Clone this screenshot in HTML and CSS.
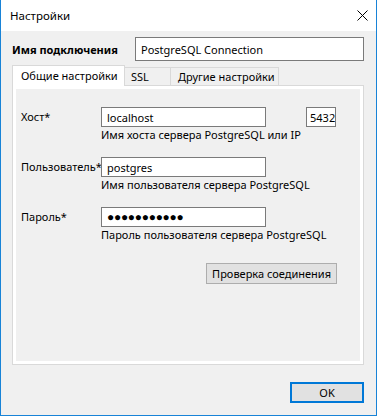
FILE: index.html
```html
<!DOCTYPE html>
<html lang="ru">
<head>
    <meta charset="UTF-8">
    <meta name="viewport" content="width=device-width, initial-scale=1.0">
    <title>Настройки</title>
    <link rel="stylesheet" href="styles.css">
</head>
<body>
    <div class="window">
        <div class="titlebar">
            <span class="title">Настройки</span>
            <svg class="close" width="11" height="11" viewBox="0 0 11 11">
                <path d="M0.5 0.5 L10.5 10.5 M10.5 0.5 L0.5 10.5" stroke="#000" stroke-width="1" fill="none"/>
            </svg>
        </div>
        <div class="content">
            <div class="name-row">
                <label for="conn-name">Имя подключения</label>
                <input type="text" id="conn-name" value="PostgreSQL Connection">
            </div>

            <div class="tabs">
                <div class="tab tab-general active">Общие настройки</div>
                <div class="tab tab-ssl">SSL</div>
                <div class="tab tab-other">Другие настройки</div>
            </div>
            <div class="panel">
                <div class="page">
                    <div class="field">
                        <label for="host">Хост*</label>
                        <div class="control">
                            <div class="line">
                                <input type="text" id="host" class="wide" value="localhost">
                                <input type="text" id="port" class="port" value="5432">
                            </div>
                            <div class="hint">Имя хоста сервера PostgreSQL или IP</div>
                        </div>
                    </div>
                    <div class="field">
                        <label for="user">Пользователь*</label>
                        <div class="control">
                            <input type="text" id="user" class="wide" value="postgres">
                            <div class="hint">Имя пользователя сервера PostgreSQL</div>
                        </div>
                    </div>
                    <div class="field">
                        <label for="pass">Пароль*</label>
                        <div class="control">
                            <div class="wide dots" id="pass">●●●●●●●●●●●</div>
                            <div class="hint">Пароль пользователя сервера PostgreSQL</div>
                        </div>
                    </div>
                    <div class="actions">
                        <button class="btn">Проверка соединения</button>
                    </div>
                </div>
            </div>

            <div class="footer">
                <button class="btn ok">OK</button>
            </div>
        </div>
    </div>
</body>
</html>
```

FILE: styles.css
```css
body {
    margin: 0;
    font-family: "Noto Sans", "Open Sans", sans-serif;
    font-size: 11px;
    color: #000;
}
.window {
    width: 377px;
    height: 416px;
    box-sizing: border-box;
    border: 1px solid #1883d7;
    border-top: none;
    background: #f0f0f0;
}
.titlebar {
    height: 31px;
    background: #fff;
    display: flex;
    align-items: center;
    justify-content: space-between;
    padding: 0 8px 0 9px;
}
.title {
    font-size: 11.5px;
}
.content {
    padding: 6px 12px 0 11px;
}
.name-row {
    display: flex;
    align-items: center;
    justify-content: space-between;
}
.name-row label {
    font-weight: bold;
}
input, .dots {
    font-family: inherit;
    font-size: 11px;
    box-sizing: border-box;
    border: 1px solid #7a7a7a;
    background: #fff;
    height: 20px;
    padding: 0 0 0 5px;
    margin: 0;
    outline: none;
}
.name-row input {
    width: 229px;
    height: 24px;
}
.tabs {
    display: flex;
    align-items: flex-end;
    margin-top: 4px;
    height: 20px;
}
.tab {
    height: 18px;
    box-sizing: border-box;
    border: 1px solid #d9d9d9;
    border-bottom: none;
    padding: 0 0 0 7px;
    line-height: 17px;
    background: #f0f0f0;
    white-space: nowrap;
}
.tab + .tab {
    border-left: none;
}
.tab.active {
    height: 21px;
    margin-bottom: -1px;
    background: #fff;
    padding-left: 8px;
    line-height: 19px;
    position: relative;
}
.tab-general {
    width: 113px;
}
.tab-ssl {
    width: 46px;
    padding-left: 6px;
}
.tab-other {
    width: 108px;
}
.panel {
    height: 280px;
    box-sizing: border-box;
    border: 1px solid #d9d9d9;
    background: #fff;
    padding: 3px;
}
.page {
    height: 100%;
    background: #f0f0f0;
    padding: 18px 0 0 5px;
    box-sizing: border-box;
}
.field {
    display: flex;
    margin-bottom: 15px;
}
.field label {
    width: 80px;
    padding-top: 2px;
    white-space: nowrap;
}
.line {
    display: flex;
    gap: 40px;
}
.wide {
    width: 165px;
}
.port {
    width: 30px;
    padding-left: 3px;
}
.dots {
    font-size: 12px;
    line-height: 18px;
    letter-spacing: -0.3px;
}
.hint {
    line-height: 15px;
}
.actions {
    display: flex;
    justify-content: flex-end;
    padding-right: 23px;
    margin-top: 21px;
}
.btn {
    font-family: inherit;
    font-size: 11px;
    height: 21px;
    border: 1px solid #adadad;
    background: #e1e1e1;
    padding: 0 5px;
    color: #000;
}
.footer {
    display: flex;
    justify-content: flex-end;
    margin-top: 17px;
}
.ok {
    width: 74px;
    border: 2px solid #0078d7;
}
```
